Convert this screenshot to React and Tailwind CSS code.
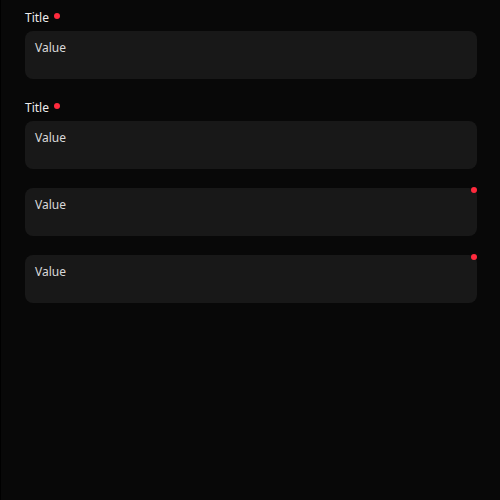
import React from 'react';

const Dot = ({ className = '' }) => (
  <span className={`block h-[6px] w-[6px] rounded-full bg-[#ff2a3d] ${className}`} />
);

const Field = ({ value, required }) => (
  <div className="relative h-12 w-full rounded-lg bg-[#181818] px-[10px] pt-[9px] text-[12px] leading-4 text-[#d8d8d8]">
    {value}
    {required && <Dot className="absolute right-0 top-[-1px]" />}
  </div>
);

const Titled = ({ title, value, className = '' }) => (
  <div className={className}>
    <div className="flex h-4 items-center gap-[5px] text-[12px] leading-4 text-[#ececec]">
      <span>{title}</span>
      <Dot className="-mt-[4px]" />
    </div>
    <div className="mt-[5px]">
      <Field value={value} />
    </div>
  </div>
);

export default function App() {
  return (
    <div
      className="flex min-h-[500px] w-[500px] flex-col border-l border-black bg-[#080808] pl-6 pr-[23px] pt-[10px]"
      style={{ fontFamily: '"Noto Sans", "Open Sans", sans-serif' }}
    >
      <Titled title="Title" value="Value" />
      <Titled title="Title" value="Value" className="mt-[21px]" />
      <div className="mt-[19px]">
        <Field value="Value" required />
      </div>
      <div className="mt-[19px]">
        <Field value="Value" required />
      </div>
    </div>
  );
}
